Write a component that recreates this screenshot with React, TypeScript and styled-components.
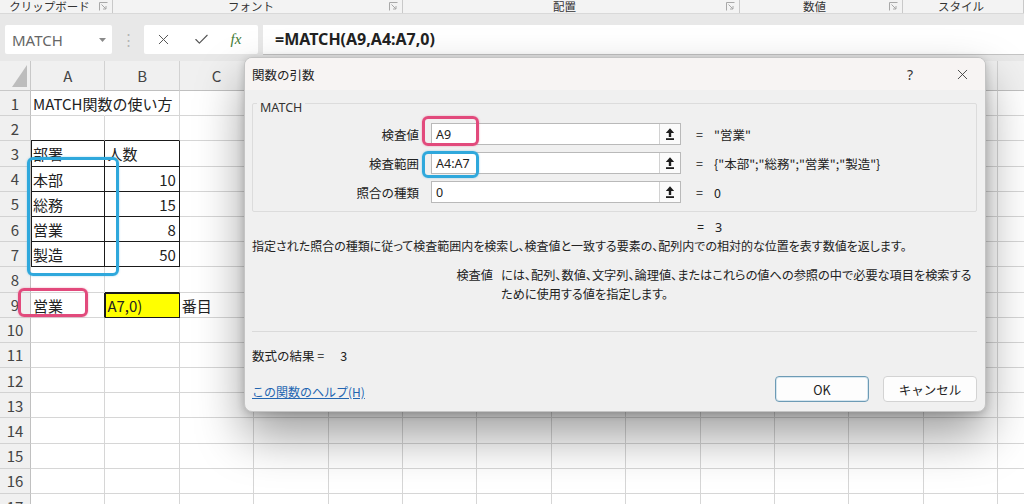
import styled, { createGlobalStyle } from 'styled-components';
import { X, Check } from 'lucide-react';

const UI_FONT = `"Noto Sans", "Noto Sans CJK JP", sans-serif`;
const JP_FONT = `"Noto Sans CJK JP", sans-serif`;

const GlobalStyle = createGlobalStyle`
  html, body { margin: 0; padding: 0; background: #ffffff; }
  body { font-family: ${UI_FONT}; color: #222; }
  * { box-sizing: border-box; }
`;

const COLUMNS = 'ABCDEFGHIJKLMN'.split('');
const ROW_COUNT = 17;

type CellData = { text: string; align?: 'left' | 'right'; fill?: string };

const cells: Record<string, CellData> = {
  A1: { text: 'MATCH関数の使い方' },
  A3: { text: '部署' },
  B3: { text: '人数' },
  A4: { text: '本部' },
  B4: { text: '10', align: 'right' },
  A5: { text: '総務' },
  B5: { text: '15', align: 'right' },
  A6: { text: '営業' },
  B6: { text: '8', align: 'right' },
  A7: { text: '製造' },
  B7: { text: '50', align: 'right' },
  A9: { text: '営業' },
  B9: { text: 'A7,0)', fill: '#ffff00' },
  C9: { text: '番目' },
};

const boxed = new Set(['A3', 'B3', 'A4', 'B4', 'A5', 'B5', 'A6', 'B6', 'A7', 'B7', 'B9']);
const isBoxed = (c: number, r: number) => boxed.has(`${COLUMNS[c]}${r}`);

const ribbonGroups = [
  { label: 'クリップボード', width: 113 },
  { label: 'フォント', width: 290 },
  { label: '配置', width: 337 },
  { label: '数値', width: 163 },
  { label: 'スタイル', width: 121, noLauncher: true },
];

const args = [
  { label: '検査値', value: 'A9', result: '"営業"', mark: 'pink' },
  { label: '検査範囲', value: 'A4:A7', result: '{"本部";"総務";"営業";"製造"}', mark: 'blue' },
  { label: '照合の種類', value: '0', result: '0' },
];

const LauncherIcon = () => (
  <svg width="9" height="9" viewBox="0 0 9 9">
    <path d="M0.5 8.5V0.5H8.5" fill="none" stroke="#a8a8a8" strokeWidth="1" />
    <path d="M2.5 2.5L7 7M7 4V7H4" fill="none" stroke="#a8a8a8" strokeWidth="1" />
  </svg>
);

const RefIcon = () => (
  <svg width="10" height="14" viewBox="0 0 10 14">
    <path d="M5 1.2L9.2 6H6.2V10H3.8V6H0.8Z" fill="#1e1e1e" />
    <rect x="1" y="11.2" width="8" height="1.8" fill="#1e1e1e" />
  </svg>
);

const App = () => {
  const rows = Array.from({ length: ROW_COUNT }, (_, i) => i + 1);
  return (
    <Page>
      <GlobalStyle />
      <RibbonStrip>
        {ribbonGroups.map((g) => (
          <RibbonGroup key={g.label} $width={g.width}>
            <RibbonLabel>{g.label}</RibbonLabel>
            {!g.noLauncher && <LauncherIcon />}
          </RibbonGroup>
        ))}
      </RibbonStrip>

      <FormulaArea>
        <NameBox>
          <span>MATCH</span>
          <svg width="7" height="4" viewBox="0 0 7 4">
            <path d="M0 0H7L3.5 4Z" fill="#8a8a8a" />
          </svg>
        </NameBox>
        <Dots>⋮</Dots>
        <FxButtons>
          <X size={17} strokeWidth={1.4} color="#555" />
          <Check size={17} strokeWidth={1.6} color="#555" />
          <FxGlyph>fx</FxGlyph>
        </FxButtons>
        <FormulaInput>=MATCH(A9,A4:A7,0)</FormulaInput>
      </FormulaArea>

      <Sheet>
        <Corner>
          <svg width="31" height="30" viewBox="0 0 31 30">
            <path d="M12 26H27V4Z" fill="#bdbdbd" />
          </svg>
        </Corner>
        {COLUMNS.map((c) => (
          <ColHeader key={c}>{c}</ColHeader>
        ))}
        {rows.map((r) => [
          <RowHeader key={`h${r}`}>{r}</RowHeader>,
          ...COLUMNS.map((c, ci) => {
            const key = `${c}${r}`;
            const data = cells[key];
            const rightDark = isBoxed(ci, r) || isBoxed(ci + 1, r);
            const bottomDark = isBoxed(ci, r) || isBoxed(ci, r + 1);
            return (
              <Cell
                key={key}
                $right={key === 'A1' ? 'transparent' : rightDark ? '#1a1a1a' : '#d6d6d6'}
                $bottom={bottomDark ? '#1a1a1a' : '#d6d6d6'}
                $leftDark={ci === 0 && isBoxed(0, r)}
                $align={data?.align || 'left'}
                $fill={data?.fill}
              >
                {data?.text}
              </Cell>
            );
          }),
        ])}
      </Sheet>

      <Mark $color="#e24a7c" style={{ left: 18, top: 288, width: 70, height: 29 }} />
      <Mark $color="#2fa8dc" style={{ left: 27, top: 157, width: 92, height: 119 }} />

      <Dialog>
        <TitleBar>
          <Title>関数の引数</Title>
          <TitleButton $gap={6}>?</TitleButton>
          <TitleButton>
            <X size={17} strokeWidth={1.2} color="#333" />
          </TitleButton>
        </TitleBar>
        <Body>
          <ArgGroup>
            <legend>MATCH</legend>
            {args.map((a) => (
              <ArgRow key={a.label}>
                <ArgLabel>{a.label}</ArgLabel>
                <ArgInput>
                  <span>{a.value}</span>
                  <RefButton>
                    <RefIcon />
                  </RefButton>
                  {a.mark === 'pink' && <FieldMark $color="#e24a7c" $top={-8} $height={30} />}
                  {a.mark === 'blue' && <FieldMark $color="#2fa8dc" $top={-2} $height={27} />}
                </ArgInput>
                <ArgValue>
                  <Eq>=</Eq>
                  {a.result}
                </ArgValue>
              </ArgRow>
            ))}
          </ArgGroup>
          <ResultLine>
            <Eq>=</Eq>3
          </ResultLine>
          <Description>
            指定された照合の種類に従って検査範囲内を検索し、検査値と一致する要素の、配列内での相対的な位置を表す数値を返します。
          </Description>
          <ParamHelp>
            <ParamName>検査値</ParamName>
            <ParamText>
              には、配列、数値、文字列、論理値、またはこれらの値への参照の中で必要な項目を検索する
              <br />
              ために使用する値を指定します。
            </ParamText>
          </ParamHelp>
          <Divider />
          <FormulaResult>
            数式の結果 =<ResultNum>3</ResultNum>
          </FormulaResult>
          <Footer>
            <HelpLink>この関数のヘルプ(H)</HelpLink>
            <DialogButton $primary>OK</DialogButton>
            <DialogButton>キャンセル</DialogButton>
          </Footer>
        </Body>
      </Dialog>
    </Page>
  );
};

const Page = styled.div`
  position: relative;
  width: 1024px;
  height: 504px;
  overflow: hidden;
  background: #ffffff;
`;

const RibbonStrip = styled.div`
  display: flex;
  height: 14px;
  background: #f3f3f3;
  border-bottom: 1px solid #d9d9d9;
`;

const RibbonGroup = styled.div<{ $width: number }>`
  flex: 0 0 ${(p) => p.$width}px;
  display: flex;
  align-items: flex-start;
  padding-right: 4px;
  border-right: 1px solid #c9c9c9;
  height: 13px;
  svg {
    margin-top: 2px;
  }
`;

const RibbonLabel = styled.div`
  flex: 1;
  text-align: center;
  font-family: ${JP_FONT};
  font-size: 11.5px;
  line-height: 13px;
  color: #333;
`;

const FormulaArea = styled.div`
  display: flex;
  align-items: flex-start;
  height: 47px;
  padding: 11px 0 0 5px;
  background: #e8e8e8;
`;

const NameBox = styled.div`
  display: flex;
  align-items: center;
  justify-content: space-between;
  width: 107px;
  height: 29px;
  padding: 0 6px 0 7px;
  background: #ffffff;
  border-radius: 2px;
  font-size: 15px;
  color: #666;
`;

const Dots = styled.div`
  width: 32px;
  height: 29px;
  line-height: 29px;
  text-align: center;
  color: #b5b5b5;
  font-size: 15px;
`;

const FxButtons = styled.div`
  display: flex;
  align-items: center;
  justify-content: space-around;
  width: 114px;
  height: 29px;
  padding: 0 6px 0 0;
  background: #ffffff;
  border-radius: 2px;
`;

const FxGlyph = styled.span`
  font-family: 'Liberation Serif', serif;
  font-style: italic;
  font-size: 15px;
  color: #3f7a35;
`;

const FormulaInput = styled.div`
  flex: 1;
  height: 30px;
  margin-left: 5px;
  padding-left: 12px;
  background: #ffffff;
  border-bottom: 1px solid #c4c4c4;
  font-size: 16px;
  font-weight: bold;
  line-height: 29px;
  color: #222;
  white-space: nowrap;
`;

const Sheet = styled.div`
  display: grid;
  grid-template-columns: 31px repeat(14, 74.4px);
  grid-template-rows: 30px repeat(17, 25.2px);
  font-family: ${JP_FONT};
`;

const Corner = styled.div`
  background: #f0f0f0;
  border-right: 1px solid #c8c8c8;
  border-bottom: 1px solid #c8c8c8;
  line-height: 0;
`;

const ColHeader = styled.div`
  display: flex;
  align-items: center;
  justify-content: center;
  background: #f0f0f0;
  border-right: 1px solid #d2d2d2;
  border-bottom: 1px solid #c0c0c0;
  font-size: 15px;
  color: #444;
`;

const RowHeader = styled.div`
  display: flex;
  align-items: center;
  justify-content: center;
  background: #f0f0f0;
  border-right: 1px solid #c0c0c0;
  border-bottom: 1px solid #d2d2d2;
  font-size: 15px;
  color: #444;
`;

const Cell = styled.div<{
  $right: string;
  $bottom: string;
  $leftDark: boolean;
  $align: 'left' | 'right';
  $fill?: string;
}>`
  display: flex;
  align-items: center;
  justify-content: ${(p) => (p.$align === 'right' ? 'flex-end' : 'flex-start')};
  padding: 1px 3px 0 2px;
  white-space: nowrap;
  overflow: visible;
  font-size: 15px;
  color: #222;
  background: ${(p) => p.$fill || 'transparent'};
  border-right: 1px solid ${(p) => p.$right};
  border-bottom: 1px solid ${(p) => p.$bottom};
  box-shadow: ${(p) => (p.$leftDark ? 'inset 1px 0 0 #1a1a1a' : 'none')};
  ${(p) => (p.$fill ? 'box-shadow: inset 1px 1px 0 #1a1a1a;' : '')}
`;

const Mark = styled.div<{ $color: string }>`
  position: absolute;
  border: 3px solid ${(p) => p.$color};
  border-radius: 6px;
  box-shadow: 0 0 2px ${(p) => p.$color}80;
  pointer-events: none;
`;

const Dialog = styled.div`
  position: absolute;
  left: 244px;
  top: 57px;
  width: 742px;
  height: 355px;
  display: flex;
  flex-direction: column;
  background: #f0f0f0;
  border: 1px solid #c4c4c4;
  border-radius: 8px;
  box-shadow: 0 24px 48px rgba(0, 0, 0, 0.38), 0 2px 8px rgba(0, 0, 0, 0.2);
  overflow: hidden;
  font-family: ${UI_FONT};
  font-size: 12px;
  color: #222;
`;

const TitleBar = styled.div`
  display: flex;
  align-items: center;
  height: 32px;
  padding: 0 0 0 7px;
  background: #f7f4f3;
`;

const Title = styled.div`
  flex: 1;
  font-family: ${JP_FONT};
  font-size: 12.5px;
  color: #222;
`;

const TitleButton = styled.div<{ $gap?: number }>`
  display: flex;
  align-items: center;
  justify-content: center;
  width: 46px;
  height: 32px;
  margin-right: ${(p) => p.$gap || 0}px;
  font-size: 14px;
  color: #333;
`;

const Body = styled.div`
  flex: 1;
  display: flex;
  flex-direction: column;
  padding: 0 8px 9px 7px;
`;

const ArgGroup = styled.fieldset`
  margin: 5px 0 0 0;
  padding: 11px 0 8px 0;
  border: 1px solid #dcdcdc;
  border-radius: 2px;
  display: flex;
  flex-direction: column;
  gap: 7px;
  legend {
    position: relative;
    top: 4px;
    margin-left: 4px;
    padding: 0 3px;
    font-size: 12.5px;
    color: #333;
  }
`;

const ArgRow = styled.div`
  display: grid;
  grid-template-columns: 166px 250px 1fr;
  column-gap: 12px;
  align-items: center;
  height: 22px;
`;

const ArgLabel = styled.div`
  text-align: right;
  font-family: ${JP_FONT};
  font-size: 12.5px;
  color: #222;
`;

const ArgInput = styled.div`
  position: relative;
  display: flex;
  align-items: center;
  justify-content: space-between;
  height: 22px;
  padding-left: 4px;
  background: #ffffff;
  border: 1px solid #b9b9b9;
  font-size: 12.5px;
`;

const RefButton = styled.div`
  display: flex;
  align-items: center;
  justify-content: center;
  width: 21px;
  height: 20px;
  border-left: 1px solid #d2d2d2;
  background: #fbfbfb;
`;

const FieldMark = styled.div<{ $color: string; $top: number; $height: number }>`
  position: absolute;
  left: -10px;
  top: ${(p) => p.$top}px;
  width: 57px;
  height: ${(p) => p.$height}px;
  border: 3px solid ${(p) => p.$color};
  border-radius: 6px;
  box-shadow: 0 0 2px ${(p) => p.$color}80;
`;

const ArgValue = styled.div`
  display: flex;
  align-items: center;
  padding-left: 3px;
  font-family: ${JP_FONT};
  font-size: 12.5px;
  white-space: nowrap;
`;

const Eq = styled.span`
  display: inline-block;
  width: 18px;
`;

const ResultLine = styled.div`
  margin: 7px 0 0 445px;
  height: 16px;
  font-size: 12.5px;
  display: flex;
  align-items: center;
`;

const Description = styled.div`
  margin-top: 3px;
  font-family: ${JP_FONT};
  font-size: 12px;
  font-feature-settings: 'palt';
  line-height: 16px;
  white-space: nowrap;
`;

const ParamHelp = styled.div`
  display: flex;
  margin-top: 12px;
  font-family: ${JP_FONT};
  font-size: 12.2px;
  font-feature-settings: 'palt';
  line-height: 19px;
`;

const ParamName = styled.div`
  width: 249px;
  padding-right: 8px;
  text-align: right;
`;

const ParamText = styled.div`
  white-space: nowrap;
`;

const Divider = styled.div`
  margin-top: 27px;
  height: 1px;
  background: #dadada;
`;

const FormulaResult = styled.div`
  margin-top: 15px;
  font-family: ${JP_FONT};
  font-size: 12.5px;
  display: flex;
  align-items: center;
  height: 16px;
`;

const ResultNum = styled.span`
  margin-left: 16px;
`;

const Footer = styled.div`
  display: flex;
  align-items: center;
  margin-top: auto;
  gap: 14px;
`;

const HelpLink = styled.a`
  flex: 1;
  font-family: ${JP_FONT};
  font-size: 12px;
  color: #2265b0;
  text-decoration: underline;
  align-self: flex-end;
  margin-bottom: 2px;
`;

const DialogButton = styled.div<{ $primary?: boolean }>`
  display: flex;
  align-items: center;
  justify-content: center;
  width: 94px;
  height: 26px;
  background: #fdfdfd;
  border: 1px solid ${(p) => (p.$primary ? '#6d9bb5' : '#d3d3d3')};
  box-shadow: ${(p) => (p.$primary ? 'inset 0 0 0 1px #d6e6ef' : 'none')};
  border-radius: 4px;
  font-family: ${JP_FONT};
  font-size: 12.5px;
  color: #222;
`;

export default App;
